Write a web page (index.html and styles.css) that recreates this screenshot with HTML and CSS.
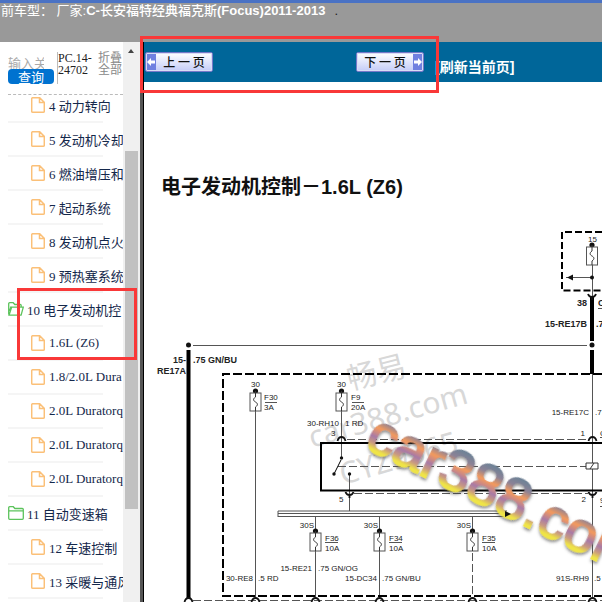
FILE: index.html
```html
<!DOCTYPE html>
<html lang="zh-CN">
<head>
    <meta charset="UTF-8">
    <meta name="viewport" content="width=device-width, initial-scale=1.0">
    <title>电子发动机控制</title>
    <link rel="stylesheet" href="styles.css">
</head>
<body>
    <svg class="sprite" width="0" height="0">
        <symbol id="doc" viewBox="0 0 14 16"><path d="M1.5 .8h7.2l4.6 4.6v8.8a1 1 0 0 1-1 1H1.7a1 1 0 0 1-1-1V1.8a1 1 0 0 1 .8-1zM8.5 1v4.6H13" fill="none" stroke="#fbc078" stroke-width="1.5"/></symbol>
        <symbol id="folder" viewBox="0 0 16 14"><path d="M.7 12.3V1.7a1 1 0 0 1 1-1h3.6l1.6 1.8h7.4a1 1 0 0 1 1 1v8.8a1 1 0 0 1-1 1H1.7a1 1 0 0 1-1-1zM1 4.8h14" fill="none" stroke="#5cc35c" stroke-width="1.3"/></symbol>
        <symbol id="folder-open" viewBox="0 0 16 14"><path d="M.7 12.5V1.7a1 1 0 0 1 1-1h3.5l1.6 1.8h5.4a1 1 0 0 1 1 1v1.6M1 13.2l2.6-8h11.7l-2.2 8zM3 4.5L1.6 9" fill="none" stroke="#5cc35c" stroke-width="1.3"/></symbol>
    </svg>

    <header class="header">
        <span class="label">前车型： 厂家:</span><strong><span class="latin">C-</span>长安福特经典福克斯<span class="latin">(Focus)2011-2013</span></strong><span class="dot">.</span>
    </header>

    <div class="main">
        <aside class="sidebar">
            <div class="side-content">
                <form class="search">
                    <div class="search-box">
                        <input type="text" placeholder="输入关键字" aria-label="输入关键字">
                        <button type="button">查询</button>
                    </div>
                    <div class="code">PC.14-24702</div>
                    <a class="fold" href="#">折叠全部</a>
                </form>
                <div class="tree-wrap">
                    <ul class="tree">
                        <li class="leaf"><a href="#"><svg><use href="#doc"/></svg>4 动力转向</a></li>
                        <li class="leaf"><a href="#"><svg><use href="#doc"/></svg>5 发动机冷却</a></li>
                        <li class="leaf"><a href="#"><svg><use href="#doc"/></svg>6 燃油增压和</a></li>
                        <li class="leaf"><a href="#"><svg><use href="#doc"/></svg>7 起动系统</a></li>
                        <li class="leaf"><a href="#"><svg><use href="#doc"/></svg>8 发动机点火</a></li>
                        <li class="leaf"><a href="#"><svg><use href="#doc"/></svg>9 预热塞系统</a></li>
                        <li class="node"><a href="#"><svg><use href="#folder-open"/></svg>10 电子发动机控</a></li>
                        <li class="leaf"><a href="#"><svg><use href="#doc"/></svg>1.6L (Z6)</a></li>
                        <li class="leaf"><a href="#"><svg><use href="#doc"/></svg>1.8/2.0L Dura</a></li>
                        <li class="leaf"><a href="#"><svg><use href="#doc"/></svg>2.0L Duratorq</a></li>
                        <li class="leaf"><a href="#"><svg><use href="#doc"/></svg>2.0L Duratorq</a></li>
                        <li class="leaf"><a href="#"><svg><use href="#doc"/></svg>2.0L Duratorq</a></li>
                        <li class="node"><a href="#"><svg><use href="#folder"/></svg>11 自动变速箱</a></li>
                        <li class="leaf"><a href="#"><svg><use href="#doc"/></svg>12 车速控制</a></li>
                        <li class="leaf"><a href="#"><svg><use href="#doc"/></svg>13 采暖与通风</a></li>
                    </ul>
                </div>
            </div>
            <div class="scrollbar">
                <div class="arrow-up"></div>
                <div class="thumb"></div>
            </div>
        </aside>

        <section class="content">
            <nav class="toolbar">
                <button type="button" class="pager prev"><span class="arrow"><svg viewBox="0 0 8 10"><path d="M0 5l4-4v2.5h4v3H4V9z" fill="#fff"/></svg></span><span class="text">上 一 页</span></button>
                <button type="button" class="pager next"><span class="text">下 一 页</span><span class="arrow"><svg viewBox="0 0 8 10"><path d="M8 5L4 1v2.5H0v3h4V9z" fill="#fff"/></svg></span></button>
                <a class="refresh" href="#">[刷新当前页]</a>
            </nav>
            <svg class="diagram" viewBox="144 82 458 520" preserveAspectRatio="xMinYMin slice">
                <defs>
                    <linearGradient id="rainbow" x1="0" y1="-40" x2="0" y2="0" gradientUnits="userSpaceOnUse">
                        <stop offset="0" stop-color="#6f8296"/>
                        <stop offset=".2" stop-color="#8c8296"/>
                        <stop offset=".4" stop-color="#f49a5c"/>
                        <stop offset=".64" stop-color="#a87aa6"/>
                        <stop offset=".8" stop-color="#c99a80"/>
                        <stop offset=".95" stop-color="#efe446"/>
                    </linearGradient>
                    <filter id="shadow" x="-10%" y="-30%" width="120%" height="160%">
                        <feDropShadow dx="1" dy="2" stdDeviation="1.5" flood-color="#444" flood-opacity=".6"/>
                    </filter>
                    <g id="fuse">
                        <circle r="2.6" fill="#111"/>
                        <rect x="-5.5" y="2" width="11" height="18" fill="#fff" stroke="#555"/>
                        <path d="M0 0v6c-3 2-2 4 0 5s3 3 0 5v4" fill="none" stroke="#333"/>
                    </g>
                    <path id="plug" d="M-4 2Q-3-2 0-2T4 2" fill="none" stroke="#111" stroke-width="1.8"/>
                    <path id="socket" d="M-4-2Q-3 1 0 1T4-2M0 0v4" fill="none" stroke="#111" stroke-width="1.8"/>
                </defs>

                <text class="title" x="161" y="194">电子发动机控制－1.6L (Z6)</text>

                <!-- 灰色水印 -->
                <g class="mark">
                    <text transform="translate(350 390) rotate(-14)">畅易</text>
                    <text transform="translate(312 448) rotate(-16)">car388.com</text>
                    <text transform="translate(343 485) rotate(-16)">CYZ9365</text>
                </g>

                <!-- 细导线 -->
                <g class="wire">
                    <path d="M193 345.5H587M255.5 411V597M341.5 411V458M349.5 474V511M315.5 517V597M379.5 517V597M472.5 517V551M592.5 374V597M592.5 265V296M566 277.5H592"/>
                    <path d="M278 511H507M278 513.5H507M278 516.5H507M278 511V517"/>
                    <path class="dash" d="M347 439.5H588M338 466.5H586M354 493.5H588M193 600.5H602M472.5 553V597"/>
                    <path d="M265 402.5H277M352 402.5H364M325 542.5H338M389 542.5H402M482 542.5H495M598 308.5H602M600 437.5H602M600 506.5H602"/>
                </g>

                <!-- 粗导线和外框 -->
                <g class="bold-wire">
                    <path d="M188.5 350V599M592 296V341M592 350V374" stroke-width="4"/>
                    <path d="M602 443H321V490.5H602" stroke-width="2"/>
                    <path d="M602 374H223V596H602" stroke-width="2" stroke-dasharray="9 3"/>
                    <path d="M602 232H562V290.5H602" stroke-width="2" stroke-dasharray="7 3"/>
                    <path d="M341 460L334 474" stroke-width="1"/>
                </g>
                <g fill="#111">
                    <circle cx="188.5" cy="345" r="2.5"/>
                    <circle cx="592" cy="345" r="2.5"/>
                    <circle cx="592" cy="277.5" r="2"/>
                    <circle cx="341.5" cy="458" r="1.7"/>
                    <circle cx="334" cy="474" r="1.7"/>
                    <circle cx="349.5" cy="474" r="1.7"/>
                    <path d="M567 277.5l6-3v6z"/>
                </g>
                <path d="M586 463h12v6h-12zM590 469l4-6" fill="#fff" stroke="#333"/>

                <use href="#fuse" x="255.5" y="391"/>
                <use href="#fuse" x="341.5" y="391"/>
                <use href="#fuse" x="315.5" y="531"/>
                <use href="#fuse" x="379.5" y="531"/>
                <use href="#fuse" x="472.5" y="531"/>
                <use href="#fuse" x="592" y="245"/>
                <use href="#plug" x="341.5" y="439"/>
                <use href="#plug" x="592.5" y="439"/>
                <use href="#socket" x="349.5" y="494"/>
                <use href="#socket" x="592.5" y="494"/>
                <use href="#socket" x="592" y="296"/>
                <use href="#plug" x="188.5" y="600"/>
                <use href="#plug" x="255.5" y="600"/>
                <use href="#plug" x="315.5" y="600"/>
                <use href="#plug" x="379.5" y="600"/>
                <use href="#plug" x="472.5" y="600"/>
                <use href="#plug" x="592.5" y="600"/>

                <g class="names strong">
                    <text class="end" x="186" y="363">15-</text>
                    <text class="end" x="186" y="374">RE17A</text>
                    <text x="193" y="363">.75 GN/BU</text>
                    <text class="end" x="587" y="306">38</text>
                    <text x="598" y="306">C</text>
                    <text class="end" x="587" y="327">15-RE17B</text>
                    <text x="596" y="327">.7</text>
                </g>
                <g class="names">
                    <text x="251" y="387">30</text>
                    <text x="337" y="387">30</text>
                    <text x="588" y="242">15</text>
                    <text x="264" y="400">F30</text>
                    <text x="264" y="410">3A</text>
                    <text x="351" y="400">F9</text>
                    <text x="351" y="410">20A</text>
                    <text class="end" x="339" y="426">30-RH10</text>
                    <text x="345" y="426">1 RD</text>
                    <text x="331" y="436">3</text>
                    <text x="339" y="502">5</text>
                    <text class="end" x="314" y="528">30S</text>
                    <text class="end" x="378" y="528">30S</text>
                    <text class="end" x="471" y="528">30S</text>
                    <text x="325" y="541">F36</text>
                    <text x="325" y="551">10A</text>
                    <text x="389" y="541">F34</text>
                    <text x="389" y="551">10A</text>
                    <text x="482" y="541">F35</text>
                    <text x="482" y="551">10A</text>
                    <text class="end" x="312" y="571">15-RE21</text>
                    <text x="318" y="571">.75 GN/OG</text>
                    <text class="end" x="253" y="581">30-RE8</text>
                    <text x="258" y="581">.5 RD</text>
                    <text class="end" x="377" y="581">15-DC34</text>
                    <text x="382" y="581">.75 GN/BU</text>
                    <text class="end" x="589" y="415">15-RE17C</text>
                    <text x="595" y="415">.7</text>
                    <text class="end" x="585" y="436">1</text>
                    <text x="600" y="436">C</text>
                    <text class="end" x="586" y="502">2</text>
                    <text x="600" y="503">9</text>
                    <text class="end" x="589" y="581">91S-RH9</text>
                    <text x="594" y="581">.5</text>
                </g>

                <text class="logo" transform="translate(363 447) rotate(26)">car388.com</text>
                <path d="M511 514l-6-3v6z" fill="#111"/>
            </svg>
        </section>
    </div>

    <div class="highlight pages"></div>
    <div class="highlight entry"></div>
</body>
</html>
```
FILE: styles.css
```css
* {
    box-sizing: border-box;
}
body {
    margin: 0;
    height: 100vh;
    display: flex;
    flex-direction: column;
    overflow: hidden;
    position: relative;
    background-color: #fff;
    font-family: "Liberation Sans", "Noto Sans CJK SC", sans-serif;
    font-size: 13px;
}
a {
    color: inherit;
    text-decoration: none;
}
.sprite {
    position: absolute;
}
.header {
    flex: none;
    height: 42px;
    border-top: 3px solid #4a72c4;
    background-color: #999;
    color: #fff;
    line-height: 16px;
    white-space: nowrap;
}
.label {
    padding-left: 1px;
}
.header strong {
    font-weight: 500;
}
.header .latin {
    font-weight: bold;
}
.dot {
    margin-left: 9px;
    color: #222;
}
.main {
    flex: 1;
    min-height: 0;
    display: flex;
}

/* 左侧目录 */
.sidebar {
    flex: none;
    width: 144px;
    display: flex;
    border-right: 1px solid #000;
    box-shadow: inset -3px 0 #555;
}
.side-content {
    flex: 1;
    min-width: 0;
    padding-left: 8px;
    display: flex;
    flex-direction: column;
    font-family: "Liberation Serif", "Noto Sans CJK SC", serif;
}
.search {
    display: flex;
    align-items: flex-start;
    height: 53px;
    padding-top: 10px;
    border-bottom: 1px dashed #bbb;
    font-size: 12px;
    line-height: 12px;
}
.search-box {
    width: 46px;
}
.search-box input {
    display: block;
    width: 36px;
    height: 17px;
    padding: 3px 0 0;
    border: none;
    outline: none;
    font: 13px "Noto Sans CJK SC", sans-serif;
}
.search-box input::placeholder {
    color: #aaa;
}
.search-box button {
    display: block;
    width: 46px;
    height: 15px;
    padding: 0;
    border: none;
    border-radius: 4px;
    background-color: #0072d0;
    color: #fff;
    font: 13px/15px "Noto Sans CJK SC", sans-serif;
}
.code {
    width: 38px;
    height: 32px;
    margin-left: 3px;
    border-left: 1px solid #bbb;
    color: #222;
}
.fold {
    width: 25px;
    margin-left: 3px;
    color: #888;
}
.tree-wrap {
    flex: 1;
    min-height: 0;
    overflow: hidden;
}
.tree {
    margin: -6px 0 0;
    padding: 0;
    list-style: none;
}
.tree li {
    width: 95px;
    height: 34px;
    border-bottom: 2px solid #f5f5f5;
}
.tree a {
    display: flex;
    align-items: center;
    height: 32px;
    white-space: nowrap;
    color: #14284b;
}
.leaf a {
    padding-left: 23px;
}
.tree svg {
    flex: none;
    width: 14px;
    height: 16px;
    margin-right: 4px;
}
.tree .node svg {
    width: 16px;
    height: 14px;
    margin-right: 3px;
}
.scrollbar {
    flex: none;
    width: 17px;
    margin-right: 3px;
    background-color: #f0f0f0;
}
.arrow-up {
    width: 0;
    margin: 7px 0 0 5px;
    border: 3px solid transparent;
    border-top: none;
    border-bottom: 4px solid #444;
}
.thumb {
    width: 13px;
    height: 64%;
    margin: 98px 0 0 2px;
    background-color: #c1c1c1;
}

/* 右侧内容 */
.content {
    flex: 1;
    min-width: 0;
    display: flex;
    flex-direction: column;
}
.toolbar {
    flex: none;
    display: flex;
    align-items: flex-start;
    height: 40px;
    padding: 10px 0 0 1px;
    background-color: #069;
}
.pager {
    display: flex;
    width: 68px;
    height: 20px;
    padding: 0;
    border: 1px solid #7478c8;
    border-radius: 2px;
    outline: 1px solid #d8dcf4;
    outline-offset: -2px;
    background: linear-gradient(#fff, #c4ccf8);
    color: #111;
    font: 500 12px/18px "Noto Sans CJK SC", sans-serif;
}
.pager .text {
    flex: 1;
    white-space: nowrap;
}
.pager .arrow {
    display: flex;
    align-items: center;
    width: 10px;
    height: 18px;
    padding: 1px;
    background-color: #7080e0;
}
.pager .arrow svg {
    width: 8px;
    height: 10px;
}
.next {
    margin-left: 143px;
}
.refresh {
    margin-left: 11px;
    padding-top: 5px;
    color: #fff;
    font-size: 14px;
    font-weight: bold;
    line-height: 20px;
}
.diagram {
    flex: 1;
    min-height: 0;
    width: 100%;
}
.title {
    font-size: 20px;
    font-weight: bold;
    fill: #111;
}
.mark {
    font-family: "Noto Sans", "Noto Sans CJK SC", sans-serif;
    font-size: 30px;
    fill: #d8d8d8;
}
.wire {
    fill: none;
    stroke: #555;
}
.dash {
    stroke-dasharray: 8 3;
}
.bold-wire {
    fill: none;
    stroke: #000;
}
.names {
    font-size: 8px;
    fill: #222;
}
.strong {
    font-size: 9px;
    font-weight: bold;
}
.end {
    text-anchor: end;
}
.logo {
    font-size: 57px;
    fill: url(#rainbow);
    stroke: url(#rainbow);
    stroke-width: 2;
    filter: url(#shadow);
}

/* 红色标注框 */
.highlight {
    position: absolute;
    border: 3px solid #f93838;
}
.pages {
    left: 140px;
    top: 36px;
    width: 299px;
    height: 57px;
}
.entry {
    left: 17px;
    top: 288px;
    width: 120px;
    height: 72px;
}
```
